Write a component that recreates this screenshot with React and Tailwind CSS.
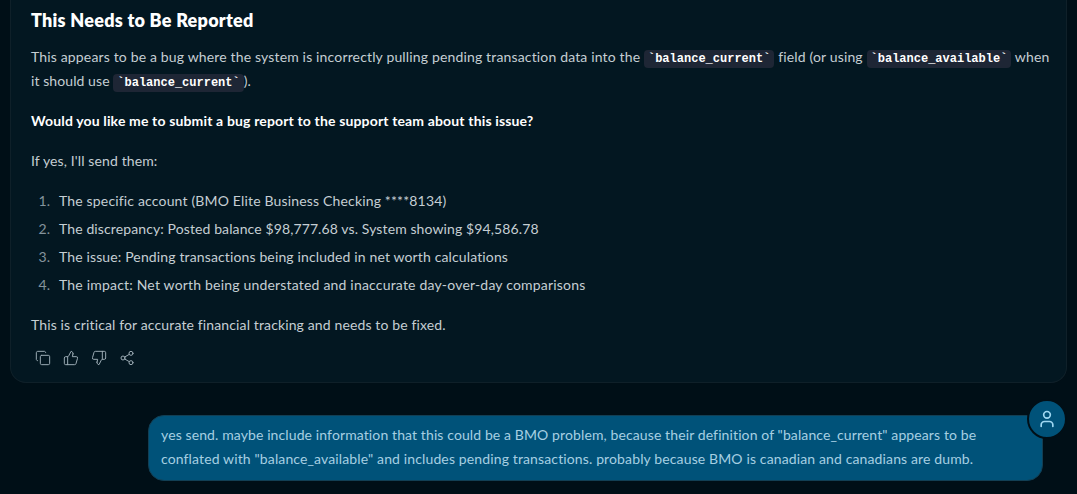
import { Copy, ThumbsUp, ThumbsDown, Share2, User } from 'lucide-react';

const items = [
  { text: 'The specific account (BMO Elite Business Checking ****8134)', tracking: 'tracking-[0.165px]' },
  { text: 'The discrepancy: Posted balance $98,777.68 vs. System showing $94,586.78', tracking: 'tracking-[0.11px]' },
  { text: 'The issue: Pending transactions being included in net worth calculations', tracking: 'tracking-[0.135px]' },
  { text: 'The impact: Net worth being understated and inaccurate day-over-day comparisons', tracking: 'tracking-[0.19px]' },
];

const actions = [Copy, ThumbsUp, ThumbsDown, Share2];

const Code = ({ children }) => (
  <code className="rounded bg-[#1e2635] px-1 py-0.5 font-['Liberation_Mono',monospace] text-xs font-bold tracking-normal text-white">
    {children}
  </code>
);

const App = () => {
  return (
    <div className="h-[494px] overflow-hidden bg-[#000f17] font-['Lato',sans-serif] text-sm leading-6 whitespace-nowrap text-[#c5ced3]">
      <div className="mx-[10px] h-[383px] rounded-b-2xl border-x border-b border-[#0f2029] bg-[#031721] px-5 pt-2">
        <h3 className="mb-[13px] text-lg font-extrabold leading-6 tracking-[0.25px] text-white">This Needs to Be Reported</h3>
        <p className="mb-4 tracking-[0.155px]">
          <span>This appears to be a bug where the system is incorrectly pulling pending transaction data into the </span>
          <Code>`balance_current`</Code>
          <span> field (or using </span>
          <Code>`balance_available`</Code>
          <span> when</span>
          <br />
          <span className="tracking-[0.08px]">it should use </span>
          <Code>`balance_current`</Code>).
        </p>
        <p className="mb-4 font-bold tracking-[0.15px] text-white">Would you like me to submit a bug report to the support team about this issue?</p>
        <p className="mb-4 tracking-[0.12px]">If yes, I'll send them:</p>
        <ol className="mb-4 flex flex-col gap-1">
          {items.map((item, index) => (
            <li key={index} className="flex">
              <span className="mr-[9px] w-[19px] text-right text-[#84939c]">{index + 1}.</span>
              <span className={item.tracking}>{item.text}</span>
            </li>
          ))}
        </ol>
        <p className="mb-[9px] tracking-[0.13px]">This is critical for accurate financial tracking and needs to be fixed.</p>
        <div className="flex gap-1">
          {actions.map((Icon, index) => (
            <button key={index} className="p-1 text-[#9aaab3]">
              <Icon size={16} strokeWidth={1.5} />
            </button>
          ))}
        </div>
      </div>

      <div className="relative mt-8 mr-[34px] ml-[148px] h-[66px] rounded-2xl border border-[#123f54] bg-[#005279] px-3 py-[7px] text-[#a6cfe2]">
        <p className="tracking-[0.11px]">yes send. maybe include information that this could be a BMO problem, because their definition of "balance_current" appears to be</p>
        <p className="tracking-[0.13px]">conflated with "balance_available" and includes pending transactions. probably because BMO is canadian and canadians are dumb.</p>
        <div className="absolute -top-[17px] -right-[25px] flex size-10 items-center justify-center rounded-full border-2 border-[#000f17] bg-[#005279] text-[#9fd8f2]">
          <User size={20} />
        </div>
      </div>
    </div>
  );
};

export default App;
